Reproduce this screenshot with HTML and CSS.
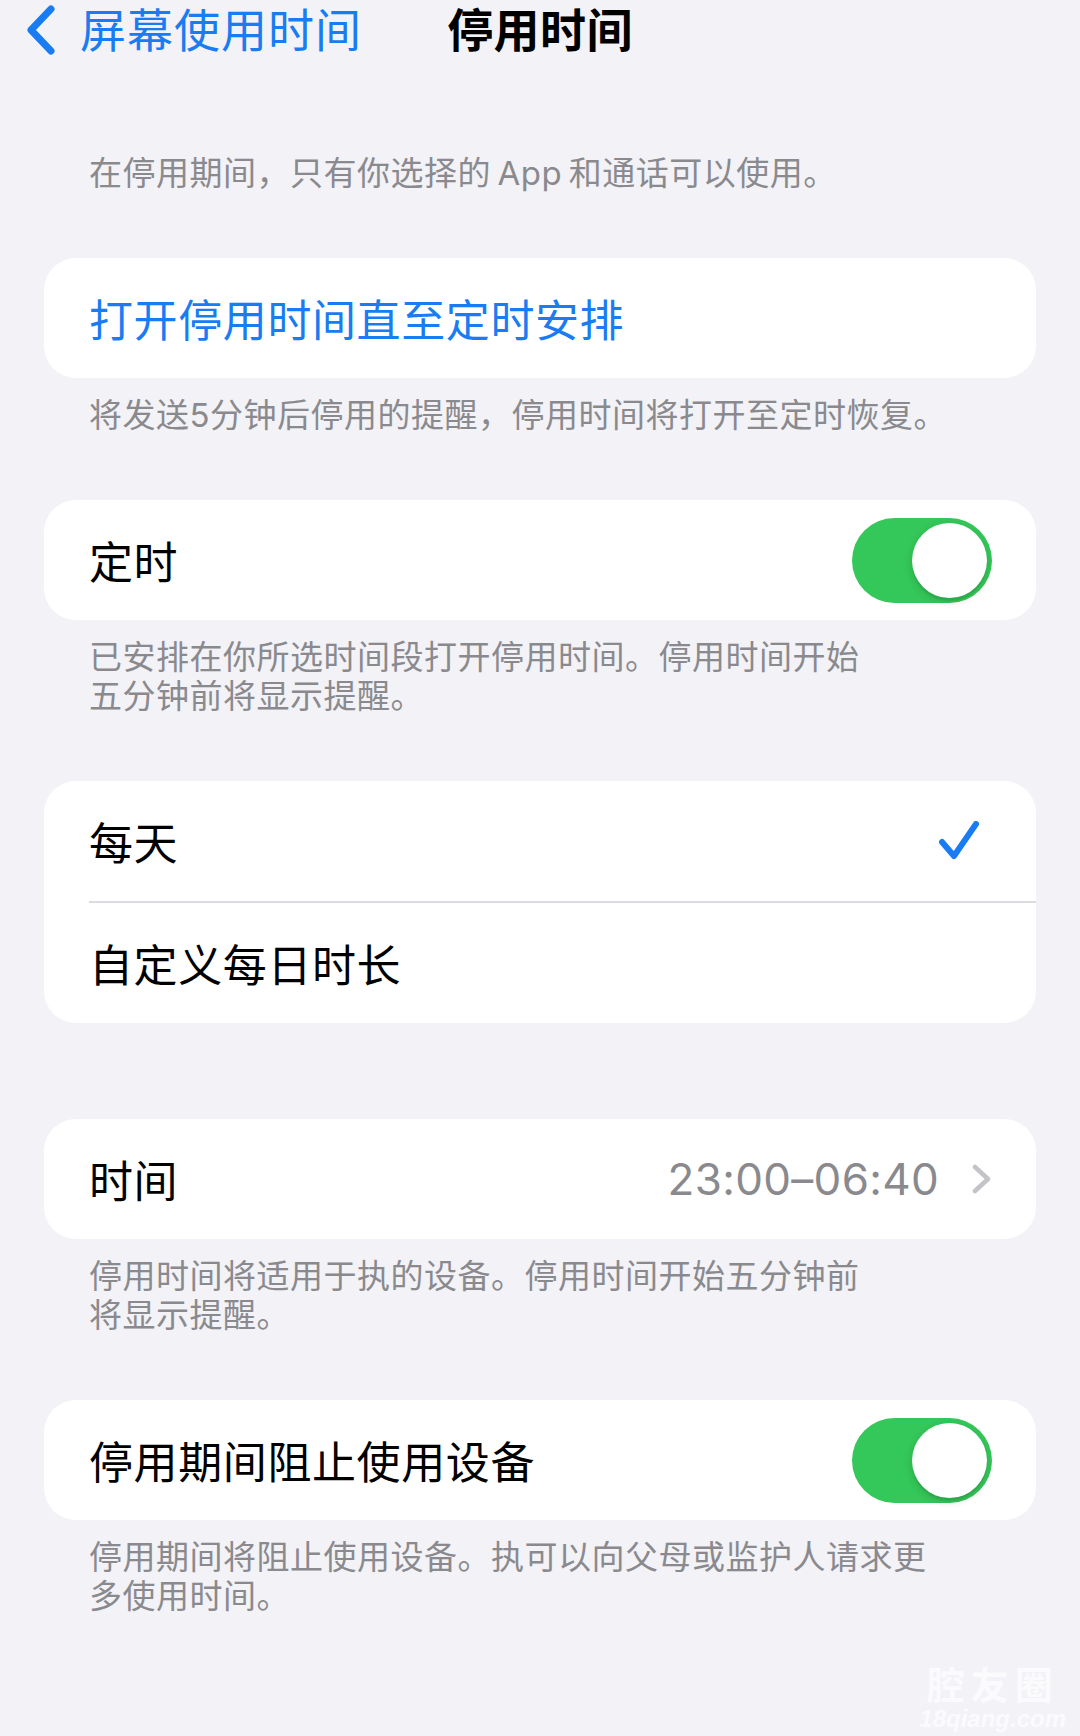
FILE: index.html
```html
<!DOCTYPE html>
<html lang="zh-CN">
<head>
    <meta charset="UTF-8">
    <meta name="viewport" content="width=device-width, initial-scale=1.0">
    <title>停用时间</title>
    <link rel="stylesheet" href="styles.css">
</head>
<body>

<div class="page">
    <div class="nav">
        <div class="back">
            <svg class="back-icon" width="30" height="50" viewBox="0 0 30 50">
                <path d="M25 4 L5 25 L25 46" fill="none" stroke="#1a7cf2" stroke-width="7" stroke-linecap="round" stroke-linejoin="round"/>
            </svg>
            <span>屏幕使用时间</span>
        </div>
        <h1 class="title">停用时间</h1>
        <div></div>
    </div>

    <p class="intro">在停用期间，只有你选择的&thinsp;App&thinsp;和通话可以使用。</p>

    <div class="card">
        <div class="row">
            <span class="link">打开停用时间直至定时安排</span>
        </div>
    </div>
    <p class="footer">将发送5分钟后停用的提醒，停用时间将打开至定时恢复。</p>

    <div class="card">
        <div class="row">
            <span>定时</span>
            <div class="toggle"><div class="knob"></div></div>
        </div>
    </div>
    <p class="footer">已安排在你所选时间段打开停用时间。停用时间开始<br>五分钟前将显示提醒。</p>

    <div class="card card-alone">
        <div class="row">
            <span>每天</span>
            <svg class="check" width="40" height="40" viewBox="0 0 40 40">
                <path d="M3 21 L15 35 L37 3" fill="none" stroke="#1a7cf2" stroke-width="6" stroke-linecap="round" stroke-linejoin="round"/>
            </svg>
        </div>
        <div class="divider"></div>
        <div class="row">
            <span>自定义每日时长</span>
        </div>
    </div>

    <div class="card">
        <div class="row">
            <span>时间</span>
            <div class="detail">
                <span class="value">23:00–06:40</span>
                <svg class="chevron" width="20" height="30" viewBox="0 0 20 30">
                    <path d="M3 3 L16 15 L3 27" fill="none" stroke="#c4c4c8" stroke-width="4.5" stroke-linecap="round" stroke-linejoin="round"/>
                </svg>
            </div>
        </div>
    </div>
    <p class="footer">停用时间将适用于执的设备。停用时间开始五分钟前<br>将显示提醒。</p>

    <div class="card">
        <div class="row">
            <span>停用期间阻止使用设备</span>
            <div class="toggle"><div class="knob"></div></div>
        </div>
    </div>
    <p class="footer">停用期间将阻止使用设备。执可以向父母或监护人请求更<br>多使用时间。</p>

    <div class="watermark">
        <div class="wm-name">腔友圈</div>
        <div class="wm-site">18qiang.com</div>
    </div>
</div>

</body>
</html>
```

FILE: styles.css
```css
body {
    margin: 0;
    padding: 0;
    background: #f2f2f7;
    font-family: Inter, "Noto Sans CJK SC", sans-serif;
    color: #000;
}
.page {
    position: relative;
    width: 1080px;
    height: 1736px;
    overflow: hidden;
}
.nav {
    display: grid;
    grid-template-columns: 1fr auto 1fr;
    align-items: center;
    height: 60px;
}
.back {
    display: flex;
    align-items: center;
    gap: 24px;
    padding-left: 26px;
    color: #1a7cf2;
    font-size: 46px;
    line-height: 60px;
    letter-spacing: 1px;
}
.back-icon {
    flex-shrink: 0;
}
.title {
    margin: 0;
    font-size: 46px;
    font-weight: 700;
    line-height: 60px;
    letter-spacing: 0.4px;
}
.intro,
.footer {
    margin: 0;
    padding: 0 45px 65px 89px;
    color: #8a8a8e;
    font-size: 33px;
    line-height: 39px;
    letter-spacing: 0.5px;
    white-space: nowrap;
}
.intro {
    padding-top: 94px;
}
.footer {
    padding-top: 18px;
}
.card {
    margin: 0 44px;
    background: #fff;
    border-radius: 32px;
}
.card-alone {
    margin-bottom: 96px;
}
.row {
    display: flex;
    align-items: center;
    justify-content: space-between;
    height: 120px;
    padding: 0 44px 0 45px;
    font-size: 44px;
    letter-spacing: 0.6px;
}
.link {
    color: #1a7cf2;
}
.divider {
    height: 2px;
    margin-left: 45px;
    background: #dcdce0;
}
.toggle {
    display: flex;
    justify-content: flex-end;
    align-items: center;
    width: 140px;
    height: 85px;
    padding: 0 5px;
    box-sizing: border-box;
    border-radius: 43px;
    background: #34c759;
}
.knob {
    width: 75px;
    height: 75px;
    border-radius: 50%;
    background: #fff;
    box-shadow: 0 3px 8px rgba(0, 0, 0, 0.15), 0 3px 1px rgba(0, 0, 0, 0.06);
}
.check {
    margin-right: 13px;
}
.detail {
    display: flex;
    align-items: center;
    gap: 33px;
}
.value {
    color: #8a8a8e;
    letter-spacing: 0.3px;
}
.watermark {
    position: absolute;
    right: 14px;
    bottom: 4px;
    color: rgba(255, 255, 255, 0.75);
    text-align: center;
}
.wm-name {
    font-size: 38px;
    font-weight: 700;
    letter-spacing: 6px;
    line-height: 42px;
}
.wm-site {
    font-family: "Liberation Sans", sans-serif;
    font-size: 24px;
    font-weight: 700;
    font-style: italic;
    line-height: 26px;
}
```
